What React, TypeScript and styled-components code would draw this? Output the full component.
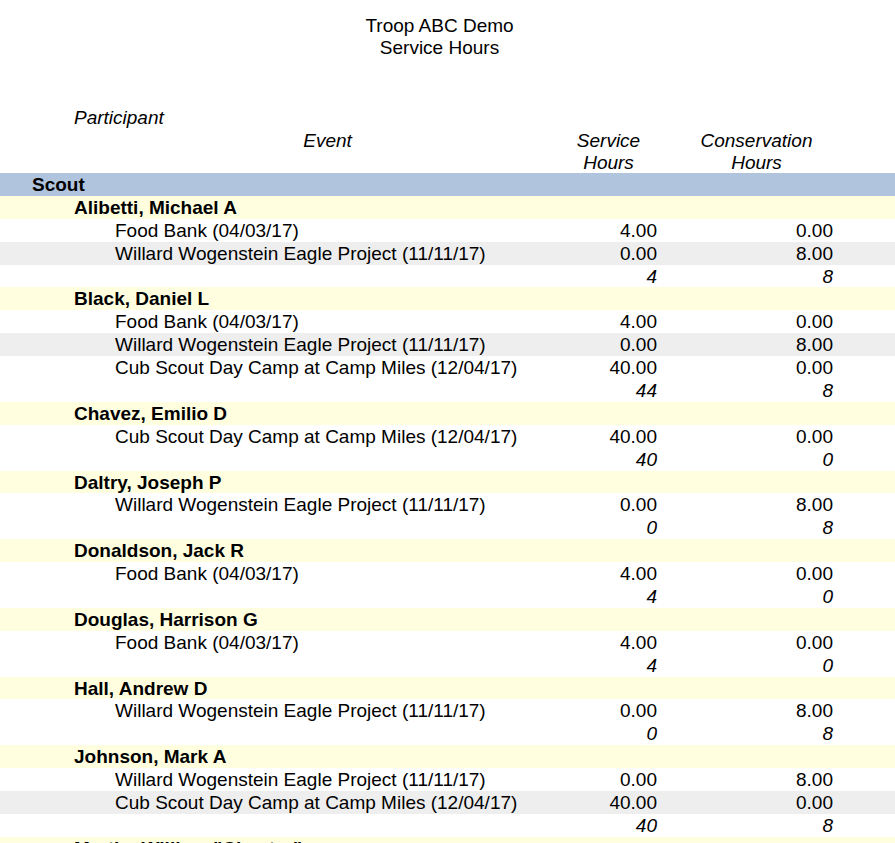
import React from "react";
import styled, { createGlobalStyle } from "styled-components";

const GlobalStyle = createGlobalStyle`
  html, body { margin: 0; padding: 0; background: #ffffff; }
  body { font-family: "Liberation Sans", Arial, sans-serif; color: #000; }
`;

const COLS = "115px 425px 117px 176px 1fr";

const Page = styled.div`
  width: 895px;
  font-size: 19px;
`;

const TitleBlock = styled.div`
  width: 879px;
  padding-top: 15px;
  text-align: center;
  line-height: 21.5px;
`;

const Header = styled.div`
  margin-top: 49px;
  height: 66px;
  font-style: italic;
  line-height: 22.5px;
`;

const HeaderLine = styled.div`
  padding-left: 74px;
  height: 22.5px;
`;

const HeaderGrid = styled.div`
  display: grid;
  grid-template-columns: ${COLS};
`;

const HeaderCell = styled.div<{ $col: number; $padLeft?: number }>`
  grid-column: ${(p) => p.$col};
  grid-row: 1;
  padding-left: ${(p) => p.$padLeft ?? 0}px;
  text-align: center;
`;

const rowBase = `
  box-sizing: border-box;
  height: 22.9px;
  padding-top: 1px;
  line-height: 21.9px;
  white-space: nowrap;
`;

const GroupRow = styled.div`
  ${rowBase}
  background: #b0c4de;
  padding-left: 32px;
  font-weight: bold;
`;

const NameRow = styled.div`
  ${rowBase}
  background: #ffffe0;
  padding-left: 74px;
  font-weight: bold;
`;

const DataRow = styled.div<{ $shade?: boolean; $italic?: boolean }>`
  ${rowBase}
  display: grid;
  grid-template-columns: ${COLS};
  background: ${(p) => (p.$shade ? "#eeeeee" : "#ffffff")};
  font-style: ${(p) => (p.$italic ? "italic" : "normal")};
`;

const EventCell = styled.div`
  grid-column: 2;
`;

const NumCell = styled.div<{ $col: number }>`
  grid-column: ${(p) => p.$col};
  text-align: right;
`;

type Ev = { name: string; svc: string; cons: string };
type Person = { name: string; events: Ev[]; totSvc: string; totCons: string };

const FOOD: Ev = { name: "Food Bank (04/03/17)", svc: "4.00", cons: "0.00" };
const EAGLE: Ev = { name: "Willard Wogenstein Eagle Project (11/11/17)", svc: "0.00", cons: "8.00" };
const CAMP: Ev = { name: "Cub Scout Day Camp at Camp Miles (12/04/17)", svc: "40.00", cons: "0.00" };

const people: Person[] = [
  { name: "Alibetti, Michael A", events: [FOOD, EAGLE], totSvc: "4", totCons: "8" },
  { name: "Black, Daniel L", events: [FOOD, EAGLE, CAMP], totSvc: "44", totCons: "8" },
  { name: "Chavez, Emilio D", events: [CAMP], totSvc: "40", totCons: "0" },
  { name: "Daltry, Joseph P", events: [EAGLE], totSvc: "0", totCons: "8" },
  { name: "Donaldson, Jack R", events: [FOOD], totSvc: "4", totCons: "0" },
  { name: "Douglas, Harrison G", events: [FOOD], totSvc: "4", totCons: "0" },
  { name: "Hall, Andrew D", events: [EAGLE], totSvc: "0", totCons: "8" },
  { name: "Johnson, Mark A", events: [EAGLE, CAMP], totSvc: "40", totCons: "8" },
  { name: "Martin, William \"Chester\"", events: [FOOD], totSvc: "4", totCons: "0" },
];

export default function App() {
  return (
    <Page>
      <GlobalStyle />
      <TitleBlock>
        <div>Troop ABC Demo</div>
        <div>Service Hours</div>
      </TitleBlock>
      <Header>
        <HeaderLine>Participant</HeaderLine>
        <HeaderGrid>
          <HeaderCell $col={2}>Event</HeaderCell>
          <HeaderCell $col={3} $padLeft={20}>
            Service
            <br />
            Hours
          </HeaderCell>
          <HeaderCell $col={4} $padLeft={23}>
            Conservation
            <br />
            Hours
          </HeaderCell>
        </HeaderGrid>
      </Header>
      <GroupRow>Scout</GroupRow>
      {people.map((p) => (
        <React.Fragment key={p.name}>
          <NameRow>{p.name}</NameRow>
          {p.events.map((e, i) => (
            <DataRow key={e.name} $shade={i % 2 === 1}>
              <EventCell>{e.name}</EventCell>
              <NumCell $col={3}>{e.svc}</NumCell>
              <NumCell $col={4}>{e.cons}</NumCell>
            </DataRow>
          ))}
          <DataRow $italic>
            <NumCell $col={3}>{p.totSvc}</NumCell>
            <NumCell $col={4}>{p.totCons}</NumCell>
          </DataRow>
        </React.Fragment>
      ))}
    </Page>
  );
}
